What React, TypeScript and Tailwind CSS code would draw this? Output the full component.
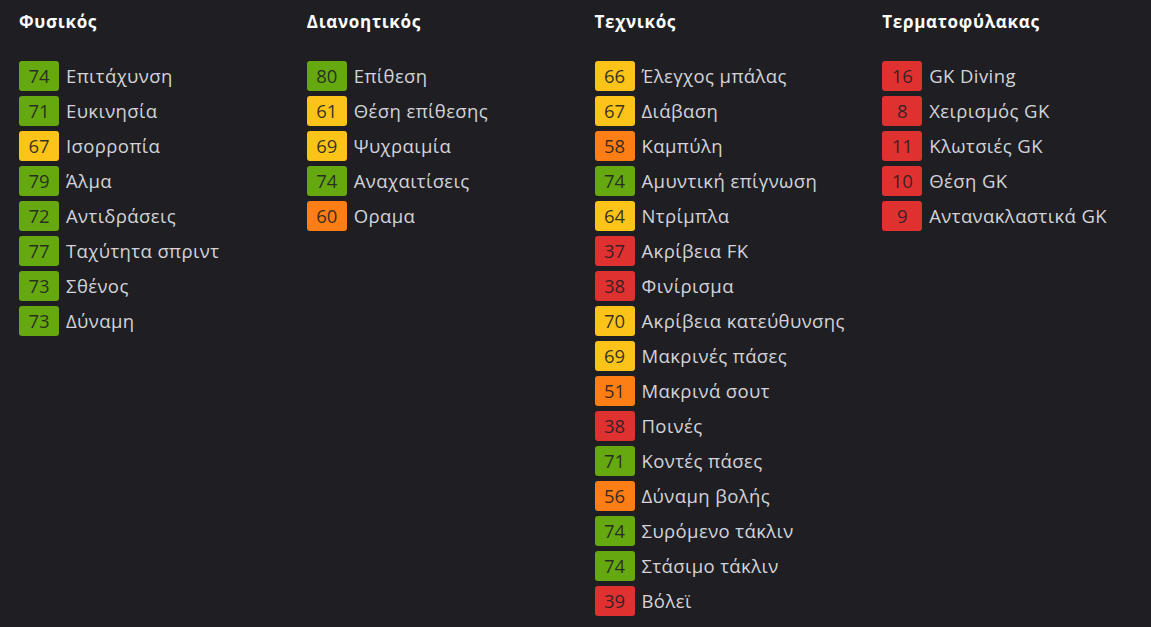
type Stat = [number, string];

const columns: { title: string; stats: Stat[] }[] = [
  {
    title: "Φυσικός",
    stats: [
      [74, "Επιτάχυνση"],
      [71, "Ευκινησία"],
      [67, "Ισορροπία"],
      [79, "Άλμα"],
      [72, "Αντιδράσεις"],
      [77, "Ταχύτητα σπριντ"],
      [73, "Σθένος"],
      [73, "Δύναμη"],
    ],
  },
  {
    title: "Διανοητικός",
    stats: [
      [80, "Επίθεση"],
      [61, "Θέση επίθεσης"],
      [69, "Ψυχραιμία"],
      [74, "Αναχαιτίσεις"],
      [60, "Οραμα"],
    ],
  },
  {
    title: "Τεχνικός",
    stats: [
      [66, "Έλεγχος μπάλας"],
      [67, "Διάβαση"],
      [58, "Καμπύλη"],
      [74, "Αμυντική επίγνωση"],
      [64, "Ντρίμπλα"],
      [37, "Ακρίβεια FK"],
      [38, "Φινίρισμα"],
      [70, "Ακρίβεια κατεύθυνσης"],
      [69, "Μακρινές πάσες"],
      [51, "Μακρινά σουτ"],
      [38, "Ποινές"],
      [71, "Κοντές πάσες"],
      [56, "Δύναμη βολής"],
      [74, "Συρόμενο τάκλιν"],
      [74, "Στάσιμο τάκλιν"],
      [39, "Βόλεϊ"],
    ],
  },
  {
    title: "Τερματοφύλακας",
    stats: [
      [16, "GK Diving"],
      [8, "Χειρισμός GK"],
      [11, "Κλωτσιές GK"],
      [10, "Θέση GK"],
      [9, "Αντανακλαστικά GK"],
    ],
  },
];

function badgeColor(v: number): string {
  if (v >= 71) return "bg-[#66a80f]";
  if (v >= 61) return "bg-[#fcc419]";
  if (v >= 50) return "bg-[#fd7e14]";
  return "bg-[#e03131]";
}

export default function App() {
  return (
    <div
      className="min-h-screen w-full bg-[#1f1f23] text-[#d3d3d9]"
      style={{ fontFamily: '"Open Sans", "Noto Sans", sans-serif' }}
    >
      <div className="grid grid-cols-4 pt-[9px]">
        {columns.map((col) => (
          <div key={col.title} className="pl-[19px]">
            <h2 className="text-[17px] font-bold text-white leading-[26px] tracking-[0.7px]">
              {col.title}
            </h2>
            <div className="mt-[26px] flex flex-col gap-[5px]">
              {col.stats.map(([v, label]) => (
                <div key={label} className="flex items-center gap-[7px]">
                  <span
                    className={`flex h-[30px] w-[40px] items-center justify-center rounded-[3px] text-[18.5px] text-[#1f1f23]/90 ${badgeColor(v)}`}
                  >
                    {v}
                  </span>
                  <span className="text-[18.5px] leading-[30px] tracking-[0.4px]">{label}</span>
                </div>
              ))}
            </div>
          </div>
        ))}
      </div>
    </div>
  );
}
